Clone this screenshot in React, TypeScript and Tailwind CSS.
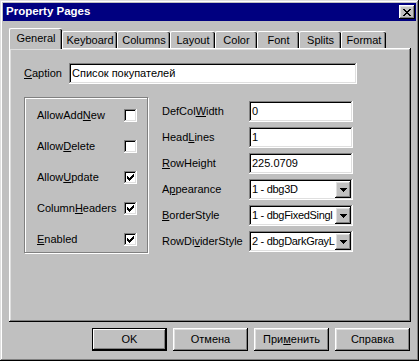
import React from "react";

const raised =
  "shadow-[inset_-1px_-1px_#000000,inset_1px_1px_#ffffff,inset_-2px_-2px_#808080,inset_2px_2px_#dfdfdf]";
const sunken =
  "shadow-[inset_-1px_-1px_#ffffff,inset_1px_1px_#808080,inset_-2px_-2px_#dfdfdf,inset_2px_2px_#000000]";

function CloseGlyph() {
  const rows = ["XX....XX", ".XX..XX.", "..XXXX..", "...XX...", "..XXXX..", ".XX..XX.", "XX....XX"];
  const rects: React.ReactElement[] = [];
  rows.forEach((r, y) =>
    r.split("").forEach((c, x) => {
      if (c === "X") rects.push(<rect key={`${x}-${y}`} x={x} y={y} width={1} height={1} fill="#000" />);
    })
  );
  return (
    <svg width="8" height="7" viewBox="0 0 8 7" shapeRendering="crispEdges">
      {rects}
    </svg>
  );
}

function CheckGlyph() {
  const cols: [number, number][] = [
    [0, 2],
    [1, 3],
    [2, 4],
    [3, 3],
    [4, 2],
    [5, 1],
    [6, 0],
  ];
  return (
    <svg width="7" height="7" viewBox="0 0 7 7" shapeRendering="crispEdges">
      {cols.map(([x, y]) => (
        <rect key={x} x={x} y={y} width={1} height={3} fill="#000" />
      ))}
    </svg>
  );
}

function DownArrow() {
  return (
    <svg width="7" height="4" viewBox="0 0 7 4" shapeRendering="crispEdges">
      <rect x={0} y={0} width={7} height={1} fill="#000" />
      <rect x={1} y={1} width={5} height={1} fill="#000" />
      <rect x={2} y={2} width={3} height={1} fill="#000" />
      <rect x={3} y={3} width={1} height={1} fill="#000" />
    </svg>
  );
}

function Checkbox({ checked }: { checked: boolean }) {
  return (
    <div className={`w-[13px] h-[13px] bg-white ${sunken} flex items-center justify-center shrink-0`}>
      {checked && <CheckGlyph />}
    </div>
  );
}

function Label({ pre, u, post }: { pre?: string; u: string; post?: string }) {
  return (
    <span className="whitespace-nowrap">
      {pre}
      <span className="underline underline-offset-[1px]">{u}</span>
      {post}
    </span>
  );
}

function TextField({ value, w }: { value: string; w: string }) {
  return (
    <div className={`${w} h-[21px] bg-white ${sunken} flex items-center pl-[3px] overflow-hidden whitespace-nowrap`}>
      {value}
    </div>
  );
}

function Combo({ value }: { value: string }) {
  return (
    <div className={`w-[104px] h-[21px] bg-white ${sunken} flex items-stretch p-[2px]`}>
      <div className="flex-1 overflow-hidden whitespace-nowrap flex items-center pl-[1px] tracking-[-0.3px]">
        {value}
      </div>
      <div className={`w-[16px] bg-[#c0c0c0] ${raised} flex items-center justify-center shrink-0`}>
        <DownArrow />
      </div>
    </div>
  );
}

const tabs = [
  { name: "General", w: "w-[53px]" },
  { name: "Keyboard", w: "w-[55px]" },
  { name: "Columns", w: "w-[53px]" },
  { name: "Layout", w: "w-[45px]" },
  { name: "Color", w: "w-[42px]" },
  { name: "Font", w: "w-[42px]" },
  { name: "Splits", w: "w-[42px]" },
  { name: "Format", w: "w-[45px]" },
];

function Button({ children, def }: { children: React.ReactNode; def?: boolean }) {
  if (def) {
    return (
      <div className="w-[75px] h-[23px] border border-black bg-[#c0c0c0]">
        <div className="w-full h-full shadow-[inset_-1px_-1px_#000000,inset_1px_1px_#ffffff,inset_-2px_-2px_#808080] flex items-center justify-center">
          {children}
        </div>
      </div>
    );
  }
  return (
    <div className={`w-[75px] h-[23px] bg-[#c0c0c0] ${raised} flex items-center justify-center`}>{children}</div>
  );
}

export default function App() {
  return (
    <div
      className="w-[419px] h-[361px] bg-[#c0c0c0] p-[3px] flex flex-col text-black text-[11px] leading-none shadow-[inset_-1px_-1px_#000000,inset_1px_1px_#dfdfdf,inset_-2px_-2px_#808080,inset_2px_2px_#ffffff]"
      style={{ fontFamily: '"Liberation Sans", Arial, sans-serif' }}
    >
      {/* Title bar */}
      <div className="h-[18px] bg-[#000080] flex items-center justify-between pl-[3px] pr-[1px]">
        <span className="text-white font-bold text-[11.5px]">Property Pages</span>
        <div className={`w-[16px] h-[14px] bg-[#c0c0c0] ${raised} flex items-center justify-center`}>
          <CloseGlyph />
        </div>
      </div>

      {/* Body */}
      <div className="flex flex-col pl-[6px] pt-[7px]">
        {/* Tabs */}
        <div className="flex items-end h-[20px]">
          {tabs.map((t, i) =>
            i === 0 ? (
              <div
                key={t.name}
                className={`${t.w} h-[21px] -mb-[1px] relative z-10 bg-[#c0c0c0] border-l border-t border-white rounded-t-[2px] shadow-[inset_-1px_0_#000000,inset_-2px_0_#808080] flex justify-center pt-[4px]`}
              >
                {t.name}
              </div>
            ) : (
              <div
                key={t.name}
                className={`${t.w} h-[17px] bg-[#c0c0c0] border-l border-t border-white rounded-t-[2px] shadow-[inset_-1px_0_#000000,inset_-2px_0_#808080] flex justify-center pt-[3px]`}
              >
                {t.name}
              </div>
            )
          )}
        </div>

        {/* Panel */}
        <div className="w-[402px] h-[274px] shadow-[inset_-1px_-1px_#000000,inset_1px_1px_#ffffff,inset_-2px_-2px_#808080,inset_2px_2px_#dfdfdf] flex flex-col pl-[15px] pt-[15px]">
          <div className="flex items-center">
            <div className="w-[45px]">
              <Label u="C" post="aption" />
            </div>
            <TextField value="Список покупателей" w="w-[288px]" />
          </div>

          <div className="flex mt-[13px]">
            <div className="w-[124px] h-[156px] border border-[#808080] shadow-[inset_1px_1px_#ffffff,1px_1px_#ffffff] flex flex-col gap-[18px] pt-[11px] pl-[12px]">
              {[
                { l: <Label pre="AllowAdd" u="N" post="ew" />, c: false },
                { l: <Label pre="Allow" u="D" post="elete" />, c: false },
                { l: <Label pre="Allow" u="U" post="pdate" />, c: true },
                { l: <Label pre="Column" u="H" post="eaders" />, c: true },
                { l: <Label u="E" post="nabled" />, c: true },
              ].map((r, i) => (
                <div key={i} className="flex items-center h-[13px]">
                  <div className="w-[87px]">{r.l}</div>
                  <Checkbox checked={r.c} />
                </div>
              ))}
            </div>

            <div className="flex flex-col gap-[5px] ml-[14px] mt-[4px]">
              <div className="flex items-center">
                <div className="w-[87px]">
                  <Label pre="DefCol" u="W" post="idth" />
                </div>
                <TextField value="0" w="w-[104px]" />
              </div>
              <div className="flex items-center">
                <div className="w-[87px]">
                  <Label pre="Head" u="L" post="ines" />
                </div>
                <TextField value="1" w="w-[104px]" />
              </div>
              <div className="flex items-center">
                <div className="w-[87px]">
                  <Label u="R" post="owHeight" />
                </div>
                <TextField value="225.0709" w="w-[104px]" />
              </div>
              <div className="flex items-center">
                <div className="w-[87px]">
                  <Label pre="A" u="p" post="pearance" />
                </div>
                <Combo value="1 - dbg3D" />
              </div>
              <div className="flex items-center">
                <div className="w-[87px]">
                  <Label u="B" post="orderStyle" />
                </div>
                <Combo value="1 - dbgFixedSingl" />
              </div>
              <div className="flex items-center">
                <div className="w-[87px]">
                  <Label pre="RowDi" u="v" post="iderStyle" />
                </div>
                <Combo value="2 - dbgDarkGrayL" />
              </div>
            </div>
          </div>
        </div>

        {/* Buttons */}
        <div className="flex justify-end gap-[6px] mt-[6px] w-[402px] pr-[1px]">
          <Button def>OK</Button>
          <Button>Отмена</Button>
          <Button>
            <Label pre="При" u="м" post="енить" />
          </Button>
          <Button>Справка</Button>
        </div>
      </div>
    </div>
  );
}
